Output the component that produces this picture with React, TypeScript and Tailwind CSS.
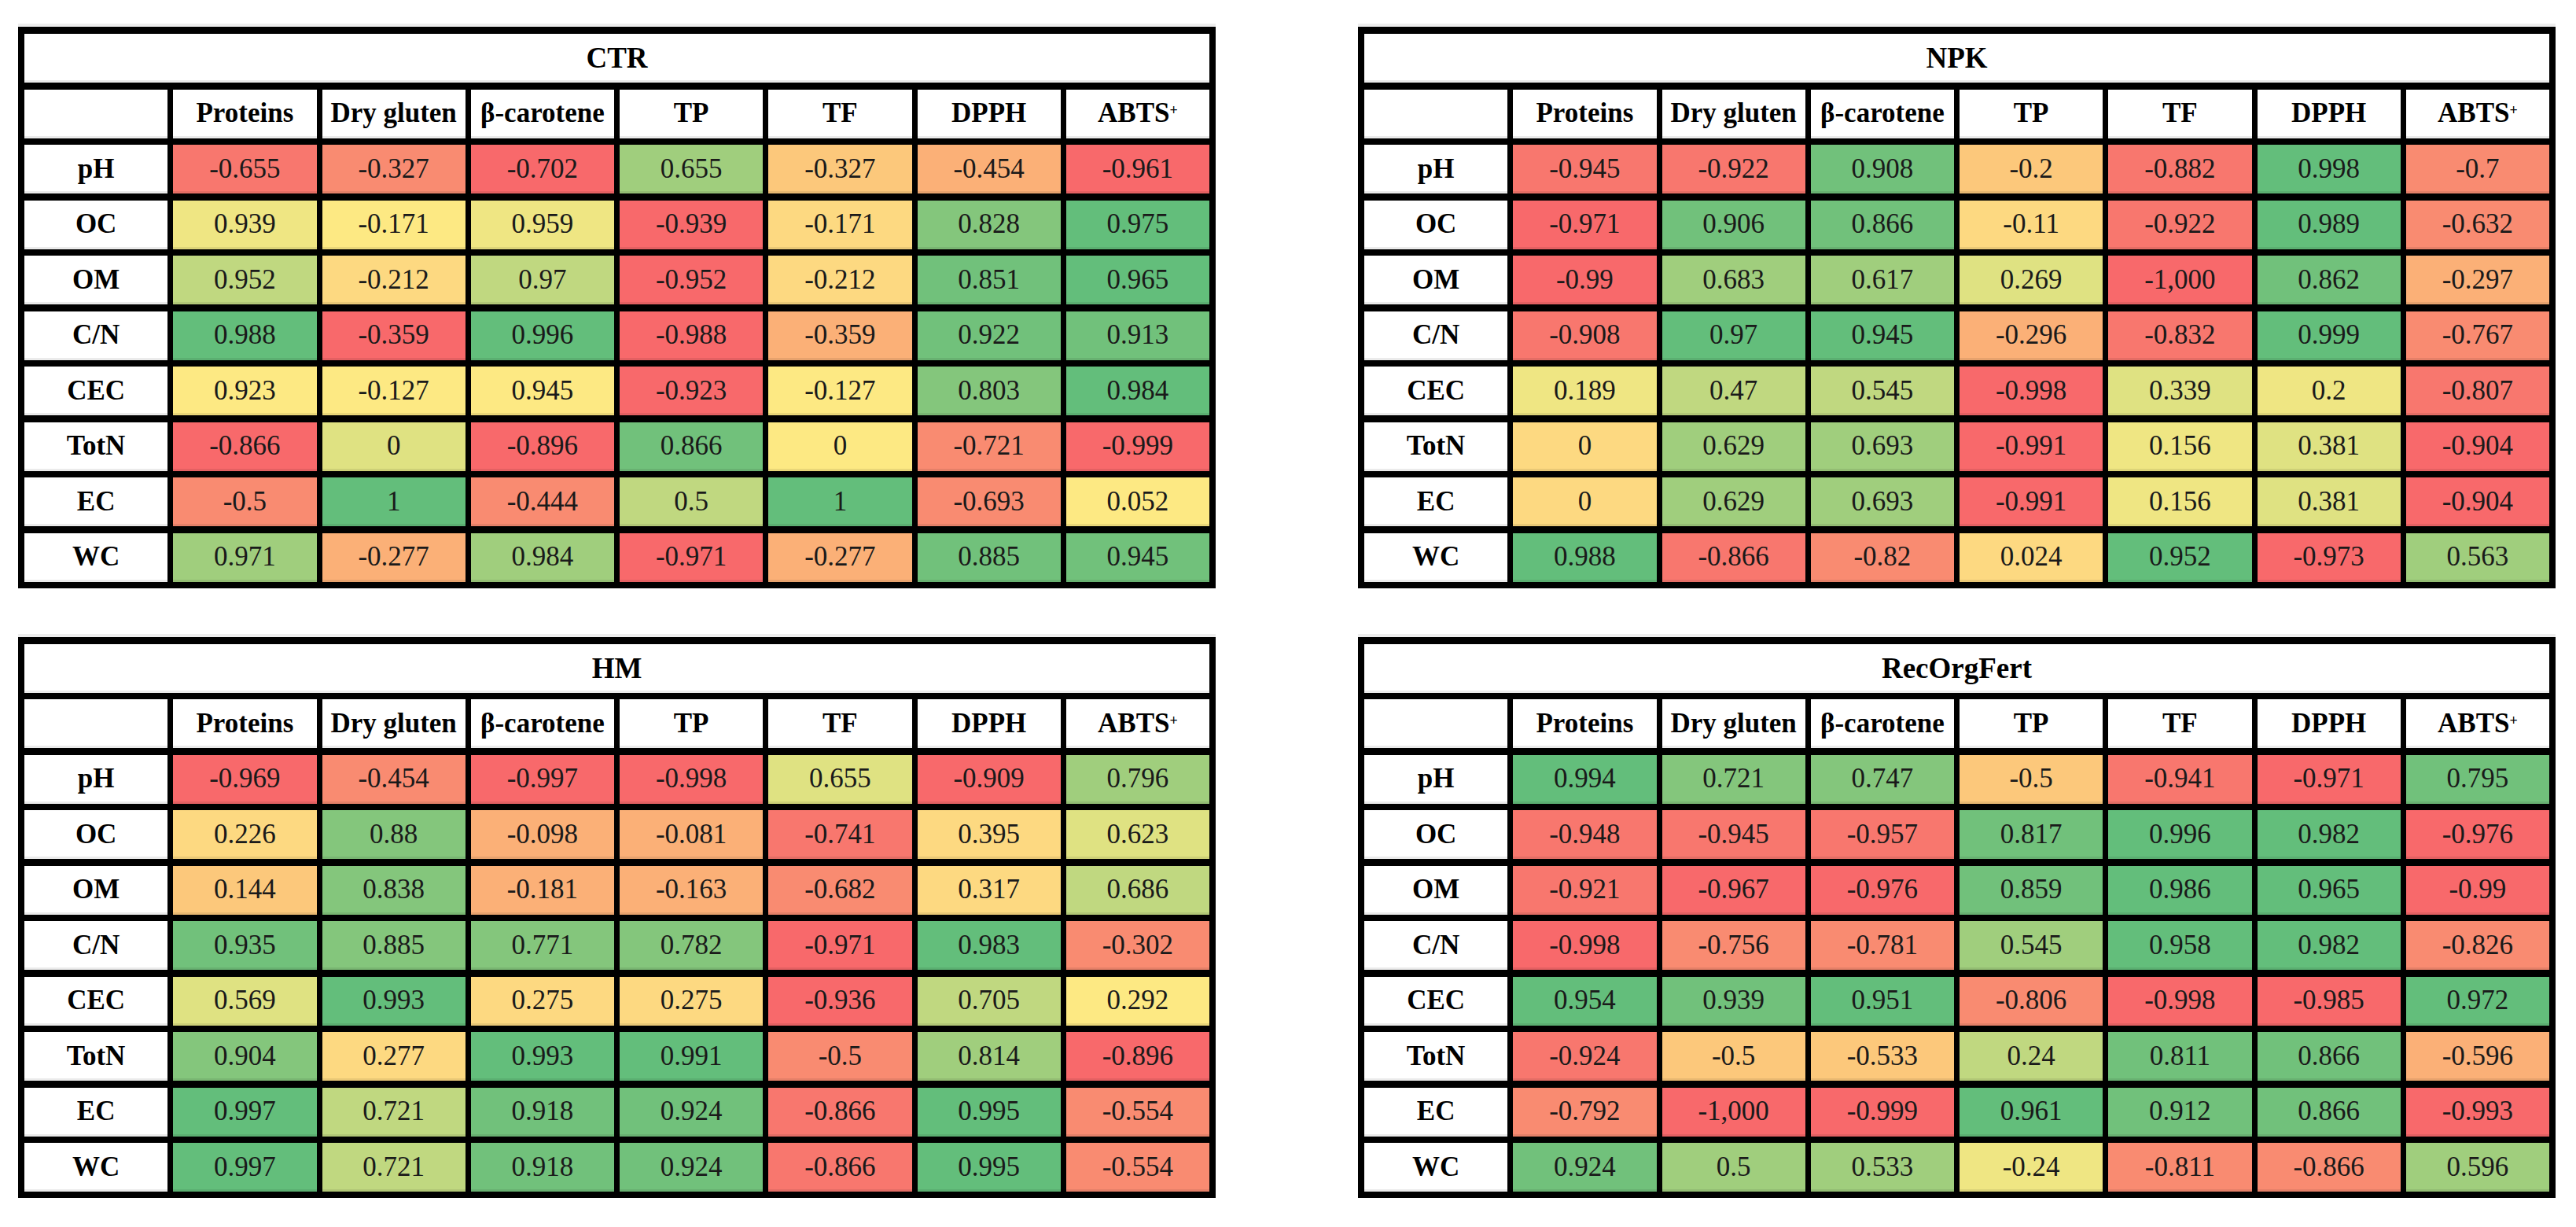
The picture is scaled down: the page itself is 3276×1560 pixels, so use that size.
import React from 'react';

const cols = ['Proteins', 'Dry gluten', 'β-carotene', 'TP', 'TF', 'DPPH', 'ABTS'];
const rows = ['pH', 'OC', 'OM', 'C/N', 'CEC', 'TotN', 'EC', 'WC'];

// colour-scale steps, red -> yellow -> green
const palette: Record<string, string> = {
  R: 'bg-[#f8696b]',
  R2: 'bg-[#f8776e]',
  S: 'bg-[#f98b71]',
  O: 'bg-[#fbb077]',
  O2: 'bg-[#fcc87b]',
  Y0: 'bg-[#fdd981]',
  Y: 'bg-[#fde983]',
  Yg: 'bg-[#efe683]',
  YG: 'bg-[#dfe282]',
  YG2: 'bg-[#c0d880]',
  LG: 'bg-[#a0ce7d]',
  G2: 'bg-[#84c67c]',
  G: 'bg-[#71c17b]',
  DG: 'bg-[#63be7b]',
};

type Table = { title: string; values: string[][]; tones: string[] };

const tables: Table[] = [
  {
    title: 'CTR',
    values: [
      ['-0.655', '-0.327', '-0.702', '0.655', '-0.327', '-0.454', '-0.961'],
      ['0.939', '-0.171', '0.959', '-0.939', '-0.171', '0.828', '0.975'],
      ['0.952', '-0.212', '0.97', '-0.952', '-0.212', '0.851', '0.965'],
      ['0.988', '-0.359', '0.996', '-0.988', '-0.359', '0.922', '0.913'],
      ['0.923', '-0.127', '0.945', '-0.923', '-0.127', '0.803', '0.984'],
      ['-0.866', '0', '-0.896', '0.866', '0', '-0.721', '-0.999'],
      ['-0.5', '1', '-0.444', '0.5', '1', '-0.693', '0.052'],
      ['0.971', '-0.277', '0.984', '-0.971', '-0.277', '0.885', '0.945'],
    ],
    tones: [
      'R2 S R LG O2 O R',
      'Yg Y Yg R Y0 G2 DG',
      'YG2 Y0 YG2 R Y0 G DG',
      'DG R DG R O G G',
      'Y Y Y R Y G2 DG',
      'R YG R G Y S R',
      'S DG S YG2 DG S Y',
      'LG O LG R O G G',
    ],
  },
  {
    title: 'NPK',
    values: [
      ['-0.945', '-0.922', '0.908', '-0.2', '-0.882', '0.998', '-0.7'],
      ['-0.971', '0.906', '0.866', '-0.11', '-0.922', '0.989', '-0.632'],
      ['-0.99', '0.683', '0.617', '0.269', '-1,000', '0.862', '-0.297'],
      ['-0.908', '0.97', '0.945', '-0.296', '-0.832', '0.999', '-0.767'],
      ['0.189', '0.47', '0.545', '-0.998', '0.339', '0.2', '-0.807'],
      ['0', '0.629', '0.693', '-0.991', '0.156', '0.381', '-0.904'],
      ['0', '0.629', '0.693', '-0.991', '0.156', '0.381', '-0.904'],
      ['0.988', '-0.866', '-0.82', '0.024', '0.952', '-0.973', '0.563'],
    ],
    tones: [
      'R2 R2 G O2 R2 DG S',
      'R G G Y0 R2 DG S',
      'R LG LG YG R G O',
      'R2 DG DG O R2 DG S',
      'Yg YG2 YG2 R YG Yg R2',
      'Y0 LG LG R Yg YG R',
      'Y0 LG LG R Yg YG R',
      'DG R2 S Y0 DG R LG',
    ],
  },
  {
    title: 'HM',
    values: [
      ['-0.969', '-0.454', '-0.997', '-0.998', '0.655', '-0.909', '0.796'],
      ['0.226', '0.88', '-0.098', '-0.081', '-0.741', '0.395', '0.623'],
      ['0.144', '0.838', '-0.181', '-0.163', '-0.682', '0.317', '0.686'],
      ['0.935', '0.885', '0.771', '0.782', '-0.971', '0.983', '-0.302'],
      ['0.569', '0.993', '0.275', '0.275', '-0.936', '0.705', '0.292'],
      ['0.904', '0.277', '0.993', '0.991', '-0.5', '0.814', '-0.896'],
      ['0.997', '0.721', '0.918', '0.924', '-0.866', '0.995', '-0.554'],
      ['0.997', '0.721', '0.918', '0.924', '-0.866', '0.995', '-0.554'],
    ],
    tones: [
      'R S R R YG R LG',
      'Y0 G2 O O R2 Y0 YG',
      'O2 G2 O O S Y0 YG2',
      'G G2 G2 G2 R DG S',
      'YG DG Y0 Y0 R YG2 Y',
      'G2 Y0 DG DG S LG R',
      'DG YG2 G G R2 DG S',
      'DG YG2 G G R2 DG S',
    ],
  },
  {
    title: 'RecOrgFert',
    values: [
      ['0.994', '0.721', '0.747', '-0.5', '-0.941', '-0.971', '0.795'],
      ['-0.948', '-0.945', '-0.957', '0.817', '0.996', '0.982', '-0.976'],
      ['-0.921', '-0.967', '-0.976', '0.859', '0.986', '0.965', '-0.99'],
      ['-0.998', '-0.756', '-0.781', '0.545', '0.958', '0.982', '-0.826'],
      ['0.954', '0.939', '0.951', '-0.806', '-0.998', '-0.985', '0.972'],
      ['-0.924', '-0.5', '-0.533', '0.24', '0.811', '0.866', '-0.596'],
      ['-0.792', '-1,000', '-0.999', '0.961', '0.912', '0.866', '-0.993'],
      ['0.924', '0.5', '0.533', '-0.24', '-0.811', '-0.866', '0.596'],
    ],
    tones: [
      'DG G2 G2 O2 R2 R G',
      'R2 R2 R2 G DG DG R',
      'R2 R R G DG DG R',
      'R S S LG DG DG S',
      'DG G DG S R R DG',
      'R2 O2 O2 YG2 G G O',
      'S R R DG G G R',
      'G LG LG Yg S S LG',
    ],
  },
];

const cell = 'h-[62px] flex items-center justify-center shadow-[inset_0_-3px_0_rgba(0,0,0,0.08)]';

function CorrTable({ t }: { t: Table }) {
  return (
    <div className="bg-black p-[8px] pt-[9px] grid grid-cols-8 gap-x-[7px] gap-y-[8.5px] shadow-[0_-4px_0_#ededed]">
      <div className={`${cell} col-span-8 bg-white font-bold text-[37px]`}>{t.title}</div>
      <div className={`${cell} bg-white`} />
      {cols.map((c) => (
        <div key={c} className={`${cell} bg-white font-bold whitespace-nowrap`}>
          {c === 'ABTS' ? (
            <span>
              ABTS<sup className="text-[18px]">+</sup>
            </span>
          ) : (
            c
          )}
        </div>
      ))}
      {rows.map((r, i) => {
        const tones = t.tones[i].split(' ');
        return (
          <React.Fragment key={r}>
            <div className={`${cell} bg-white font-bold`}>{r}</div>
            {t.values[i].map((v, j) => (
              <div key={j} className={`${cell} ${palette[tones[j]]} text-[#1a1a1a]`}>
                {v}
              </div>
            ))}
          </React.Fragment>
        );
      })}
    </div>
  );
}

export default function App() {
  return (
    <div className="w-[3276px] h-[1560px] bg-white font-['Liberation_Serif','Times_New_Roman',serif] text-[35px] text-black">
      <div className="pl-[23px] pt-[34px] grid grid-cols-[1523px_1523px] gap-x-[181px] gap-y-[62px]">
        {tables.map((t) => (
          <CorrTable key={t.title} t={t} />
        ))}
      </div>
    </div>
  );
}
